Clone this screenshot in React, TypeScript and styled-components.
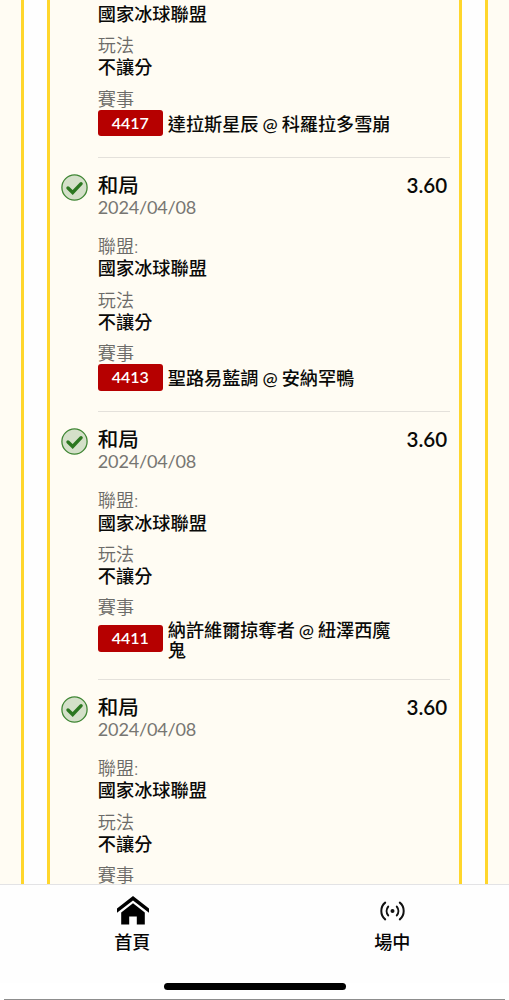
import React from 'react';
import styled, { createGlobalStyle } from 'styled-components';

const Global = createGlobalStyle`
  * { box-sizing: border-box; }
  body {
    margin: 0;
    background: #fff;
    color: #0a0a08;
    font-family: Lato, "Noto Sans CJK TC", sans-serif;
  }
`;

const Screen = styled.div`
  display: flex;
  flex-direction: column;
  height: 1000px;
  overflow: hidden;
`;

const Scroller = styled.main`
  display: flex;
  height: 884px;
  flex: none;
  overflow: hidden;
  background: #fffcf3;
  padding: 0 20.8px;
`;

const Panel = styled.div`
  flex: 1;
  display: flex;
  background: #fefefe;
  border: solid #ffd62c;
  border-width: 0 3px;
  padding: 0 23px;
`;

const Slip = styled.section`
  flex: 1;
  min-width: 0;
  height: 884px;
  overflow: hidden;
  background: #fffcf3;
  border: solid #ffd62c;
  border-width: 0 3px;
  padding: 2.9px 9px 0 11px;
`;

const Entry = styled.article`
  display: grid;
  grid-template-columns: 37px 1fr;
`;

const Mark = styled.div`
  padding-top: 17px;
  line-height: 0;
`;

const Body = styled.div<{ $first?: boolean }>`
  border-top: ${(p) => (p.$first ? '0' : '1px solid #e4e1db')};
  padding: ${(p) => (p.$first ? '0' : '14.4px')} 0 20.9px;
`;

const Head = styled.header`
  display: flex;
  justify-content: space-between;
  padding-right: 3px;
  height: 24px;
  font-size: 20.5px;
  line-height: 24px;
  font-weight: 500;
`;

const Odds = styled.span`
  font-size: 20.6px;
  font-weight: 600;
`;

const DateLine = styled.div`
  height: 22px;
  margin-bottom: 16.5px;
  font-size: 18.1px;
  line-height: 20.4px;
  letter-spacing: -0.2px;
  color: #777672;
`;

const Field = styled.div`
  margin-bottom: 9.3px;
  &:last-child { margin-bottom: 0; }
`;

const Label = styled.div`
  height: 22.2px;
  font-size: 18.1px;
  line-height: 22px;
  font-weight: 350;
  color: #6c6b68;
`;

const Value = styled.div`
  height: 22px;
  font-size: 18.2px;
  line-height: 22px;
  font-weight: 500;
`;

const Match = styled.div`
  display: flex;
  align-items: center;
  gap: 5px;
`;

const Tag = styled.span`
  flex: none;
  width: 65px;
  height: 26.4px;
  border-radius: 3px;
  background: #b60000;
  color: #fff;
  text-align: center;
  font-size: 16px;
  line-height: 26px;
  font-weight: 600;
`;

const Teams = styled.span`
  width: 229px;
  padding-top: 1px;
  margin-bottom: -1px;
  font-size: 18.15px;
  line-height: 20px;
  font-weight: 500;
  word-spacing: -0.6px;
`;

const Nav = styled.nav`
  display: grid;
  grid-template-columns: 1fr 1fr;
  flex: none;
  height: 99px;
  border-top: 1px solid #e3e3e5;
  background: #fefefe;
  padding: 9px 0 0;
`;

const NavItem = styled.a<{ $shift: number }>`
  display: flex;
  flex-direction: column;
  align-items: center;
  padding-left: ${(p) => p.$shift}px;
  font-size: 18.1px;
  line-height: 24px;
  font-weight: 500;
  color: #050505;
`;

const NavIcon = styled.span<{ $lift: number }>`
  display: flex;
  align-items: center;
  height: 36px;
  padding: 0 0 ${(p) => p.$lift * 2}px 1px;
`;

const Footer = styled.footer`
  display: flex;
  justify-content: center;
  height: 17px;
  margin: 0 4px;
  border-bottom: 1px solid #8d8d8d;
`;

const HomeBar = styled.div`
  width: 182px;
  height: 7px;
  border-radius: 4px;
  background: #000;
`;

const CheckIcon = () => (
  <svg width="27" height="27" viewBox="0 0 27 27">
    <circle cx="13.5" cy="13.5" r="12.6" fill="#d4e0c9" stroke="#3f8634" strokeWidth="1.3" />
    <path d="M7 14l4.7 4.5 8.4-8.8" fill="none" stroke="#2b7720" strokeWidth="3.4" strokeLinecap="round" strokeLinejoin="miter" />
  </svg>
);

const HouseIcon = () => (
  <svg width="32" height="29" viewBox="0 0 32 29" fill="#000">
    <path d="M16 0L32 12.5v4.3L16 4.4 0 16.8v-4.3z" />
    <path d="M16 7.2l11.8 9.2V28.5h-8v-8h-7.6v8h-8V16.4z" />
  </svg>
);

const LiveIcon = () => (
  <svg width="25" height="20" viewBox="0 0 25 20" fill="none" stroke="#111" strokeWidth="2" strokeLinecap="round">
    <circle cx="12.5" cy="10" r="2" fill="#111" stroke="none" />
    <path d="M8.2 5.6a7 7 0 0 0 0 8.8M16.8 5.6a7 7 0 0 1 0 8.8M5.2 1.6C0 5.8 0 14.2 5.2 18.4M19.8 1.6C25 5.8 25 14.2 19.8 18.4" />
  </svg>
);

const BetEntry = ({ code, teams, first }: { code?: string; teams?: string; first?: boolean }) => (
  <Entry>
    <Mark>{!first && <CheckIcon />}</Mark>
    <Body $first={first}>
      {!first && (
        <>
          <Head><span>和局</span><Odds>3.60</Odds></Head>
          <DateLine>2024/04/08</DateLine>
        </>
      )}
      <Field>
        {!first && <Label>聯盟:</Label>}
        <Value>國家冰球聯盟</Value>
      </Field>
      <Field>
        <Label>玩法</Label>
        <Value>不讓分</Value>
      </Field>
      <Field>
        <Label>賽事</Label>
        {code && <Match><Tag>{code}</Tag><Teams>{teams}</Teams></Match>}
      </Field>
    </Body>
  </Entry>
);

export default function App() {
  return (
    <Screen>
      <Global />
      <Scroller>
        <Panel>
          <Slip>
            <BetEntry first code="4417" teams="達拉斯星辰 @ 科羅拉多雪崩" />
            <BetEntry code="4413" teams="聖路易藍調 @ 安納罕鴨" />
            <BetEntry code="4411" teams="納許維爾掠奪者 @ 紐澤西魔鬼" />
            <BetEntry />
          </Slip>
        </Panel>
      </Scroller>
      <Nav>
        <NavItem $shift={10}><NavIcon $lift={2}><HouseIcon /></NavIcon>首頁</NavItem>
        <NavItem $shift={21}><NavIcon $lift={1}><LiveIcon /></NavIcon>場中</NavItem>
      </Nav>
      <Footer><HomeBar /></Footer>
    </Screen>
  );
}
